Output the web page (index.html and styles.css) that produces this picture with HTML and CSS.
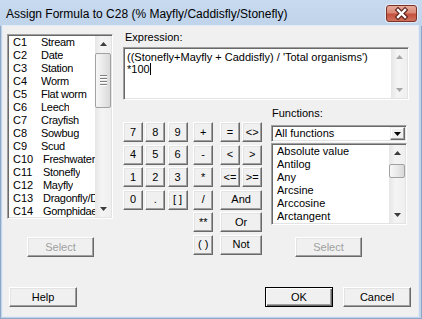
FILE: index.html
```html
<!DOCTYPE html>
<html lang="en">
<head>
    <meta charset="UTF-8">
    <title>Assign Formula to C28</title>
    <link rel="stylesheet" href="styles.css">
</head>
<body>
<div class="window">
    <div class="titlebar">
        <span class="title">Assign Formula to C28 (% Mayfly/Caddisfly/Stonefly)</span>
        <span class="close-btn">
            <svg width="31" height="17" viewBox="0 0 31 17">
                <path d="M12 5 L19 12 M19 5 L12 12" stroke="#5b2219" stroke-width="4.6" stroke-linecap="square"/>
                <path d="M12 5 L19 12 M19 5 L12 12" stroke="#fff" stroke-width="2.4" stroke-linecap="square"/>
            </svg>
        </span>
    </div>

    <div class="client">
        <div class="main">
            <!-- columns list -->
            <div class="col-left">
                <div class="listbox columns">
                    <div class="items">
                        <div class="item"><span class="num">C1</span><span class="name">Stream</span></div>
                        <div class="item"><span class="num">C2</span><span class="name">Date</span></div>
                        <div class="item"><span class="num">C3</span><span class="name">Station</span></div>
                        <div class="item"><span class="num">C4</span><span class="name">Worm</span></div>
                        <div class="item"><span class="num">C5</span><span class="name">Flat worm</span></div>
                        <div class="item"><span class="num">C6</span><span class="name">Leech</span></div>
                        <div class="item"><span class="num">C7</span><span class="name">Crayfish</span></div>
                        <div class="item"><span class="num">C8</span><span class="name">Sowbug</span></div>
                        <div class="item"><span class="num">C9</span><span class="name">Scud</span></div>
                        <div class="item dd"><span class="num">C10</span><span class="name">Freshwater clam</span></div>
                        <div class="item dd"><span class="num">C11</span><span class="name">Stonefly</span></div>
                        <div class="item dd"><span class="num">C12</span><span class="name">Mayfly</span></div>
                        <div class="item dd"><span class="num">C13</span><span class="name">Dragonfly/Damselfly</span></div>
                        <div class="item dd"><span class="num">C14</span><span class="name">Gomphidae</span></div>
                    </div>
                    <div class="sb">
                        <div class="arrow"><svg width="7" height="4"><polygon points="0,4 3.5,0 7,4" fill="#3c3c3c"/></svg></div>
                        <div class="track">
                            <div class="thumb big">
                                <span class="grip"></span><span class="grip"></span><span class="grip"></span><span class="grip"></span>
                            </div>
                        </div>
                        <div class="arrow"><svg width="7" height="4"><polygon points="0,0 7,0 3.5,4" fill="#3c3c3c"/></svg></div>
                    </div>
                </div>
                <button class="btn select-left" disabled>Select</button>
            </div>

            <!-- expression and keypad -->
            <div class="col-right">
                <div class="label expr-label">Expression:</div>
                <div class="expr">
                    <div class="expr-text">((Stonefly+Mayfly + Caddisfly) / 'Total organisms')<br>*100<span class="caret"></span></div>
                    <div class="sb">
                        <div class="arrow"><svg width="7" height="4"><polygon points="0,4 3.5,0 7,4" fill="#a6a6a6"/></svg></div>
                        <div class="track"></div>
                        <div class="arrow"><svg width="7" height="4"><polygon points="0,0 7,0 3.5,4" fill="#a6a6a6"/></svg></div>
                    </div>
                </div>

                <div class="lower">
                    <div class="keypad">
                        <div class="digits">
                            <button class="btn key">7</button>
                            <button class="btn key">8</button>
                            <button class="btn key">9</button>
                            <button class="btn key">4</button>
                            <button class="btn key">5</button>
                            <button class="btn key">6</button>
                            <button class="btn key">1</button>
                            <button class="btn key">2</button>
                            <button class="btn key">3</button>
                            <button class="btn key">0</button>
                            <button class="btn key">.</button>
                            <button class="btn key">[ ]</button>
                        </div>
                        <div class="ops">
                            <button class="btn key">+</button>
                            <button class="btn key">-</button>
                            <button class="btn key">*</button>
                            <button class="btn key">/</button>
                            <button class="btn key">**</button>
                            <button class="btn key">( )</button>
                        </div>
                        <div class="compare">
                            <button class="btn key">=</button>
                            <button class="btn key">&lt;&gt;</button>
                            <button class="btn key">&lt;</button>
                            <button class="btn key">&gt;</button>
                            <button class="btn key">&lt;=</button>
                            <button class="btn key">&gt;=</button>
                            <button class="btn key wide">And</button>
                            <button class="btn key wide">Or</button>
                            <button class="btn key wide">Not</button>
                        </div>
                    </div>

                    <div class="functions">
                        <div class="label func-label">Functions:</div>
                        <div class="dropdown">
                            <span class="dd-text">All functions</span>
                            <span class="dd-btn"><svg width="7" height="4"><polygon points="0,0 7,0 3.5,4" fill="#000"/></svg></span>
                        </div>
                        <div class="listbox funcs">
                            <div class="items">
                                <div class="item">Absolute value</div>
                                <div class="item">Antilog</div>
                                <div class="item">Any</div>
                                <div class="item">Arcsine</div>
                                <div class="item">Arccosine</div>
                                <div class="item">Arctangent</div>
                            </div>
                            <div class="sb">
                                <div class="arrow"><svg width="7" height="4"><polygon points="0,4 3.5,0 7,4" fill="#3c3c3c"/></svg></div>
                                <div class="track">
                                    <div class="thumb small"></div>
                                </div>
                                <div class="arrow"><svg width="7" height="4"><polygon points="0,0 7,0 3.5,4" fill="#3c3c3c"/></svg></div>
                            </div>
                        </div>
                        <button class="btn select-right" disabled>Select</button>
                    </div>
                </div>
            </div>
        </div>

        <div class="footer">
            <button class="btn action">Help</button>
            <button class="btn action default ok">OK</button>
            <button class="btn action">Cancel</button>
        </div>
    </div>
</div>
</body>
</html>
```

FILE: styles.css
```css
* {
    box-sizing: border-box;
}
body {
    margin: 0;
    font-family: "Liberation Sans", Arial, sans-serif;
    font-size: 11px;
    color: #000;
}
.window {
    width: 422px;
    height: 319px;
    display: flex;
    flex-direction: column;
    background: #c0d4eb;
    box-shadow: inset 0 0 0 1px #8ea7c4;
}
/* Title bar */
.titlebar {
    height: 26px;
    display: flex;
    align-items: center;
    justify-content: space-between;
    padding: 1px 5px 0 6px;
    background: linear-gradient(#c8daef, #bfd3ea);
}
.title {
    font-size: 12px;
    color: #000;
}
.close-btn {
    width: 31px;
    height: 17px;
    display: block;
    border: 1px solid #7c3227;
    border-radius: 3px;
    background: linear-gradient(#e7aa9c 0%, #d98874 45%, #c4503d 55%, #d0735c 100%);
    box-shadow: 0 0 0 1px rgba(255, 255, 255, 0.5);
}
.close-btn svg {
    display: block;
    margin: -1px 0 0 -1px;
}
/* Client area */
.client {
    flex: 1;
    margin: 0 4px 3px 3px;
    background: #f0f0f0;
    display: flex;
    flex-direction: column;
    box-shadow: 0 0 0 1px #e3ebf5;
}
.main {
    flex: 1;
    display: flex;
}
.col-left {
    padding: 8px 0 0 4px;
    width: 110px;
}
.col-right {
    padding-top: 5px;
    margin-left: 10px;
    width: 286px;
}
.label {
    line-height: 13px;
    height: 13px;
}
.expr-label {
    padding-left: 2px;
    margin-bottom: 3px;
}
/* Sunken controls */
.listbox,
.expr,
.dropdown {
    background: #fff;
    border: 1px solid;
    border-color: #a0a0a0 #fff #fff #a0a0a0;
    box-shadow: inset 1px 1px #696969, inset -1px -1px #e3e3e3;
    padding: 1px;
    display: flex;
}
.listbox .items {
    flex: 1;
    overflow: hidden;
    padding-left: 4px;
}
.item {
    height: 13px;
    line-height: 13px;
    white-space: nowrap;
    display: flex;
}
.item .num {
    width: 28px;
    flex: none;
}
.item.dd .num {
    width: 30px;
}
.item .name {
    overflow: hidden;
    letter-spacing: -0.3px;
}
.columns {
    width: 106px;
    height: 185px;
}
.expr {
    height: 53px;
}
.expr-text {
    flex: 1;
    padding: 2px 0 0 2px;
    line-height: 12px;
    white-space: nowrap;
}
.caret {
    display: inline-block;
    width: 1px;
    height: 12px;
    background: #000;
    vertical-align: top;
}
/* Scrollbars */
.sb {
    width: 16px;
    flex: none;
    display: flex;
    flex-direction: column;
    background: linear-gradient(to right, #e6e6e6, #f4f4f4 40%, #efefef);
}
.sb .arrow {
    height: 16px;
    display: flex;
    align-items: center;
    justify-content: center;
}
.sb .arrow svg {
    display: block;
}
.sb .track {
    flex: 1;
    display: flex;
    flex-direction: column;
}
.thumb {
    margin: 1px 0 0 0;
    border: 1px solid #a2a2a2;
    border-radius: 2px;
    background: linear-gradient(to right, #f7f7f7, #e9e9e9 50%, #d9d9d9);
    display: flex;
    flex-direction: column;
    align-items: center;
    justify-content: center;
    gap: 1px;
}
.thumb.big {
    height: 55px;
}
.thumb.small {
    height: 14px;
    margin-top: 3px;
}
.grip {
    width: 7px;
    height: 1px;
    background: #808080;
    box-shadow: 0 1px #fff;
    margin-bottom: 1px;
}
/* Buttons */
.btn {
    font: inherit;
    font-size: 11px;
    color: #000;
    padding: 0;
    height: 20px;
    background: #f0f0f0;
    border: 1px solid;
    border-color: #fff #696969 #696969 #fff;
    box-shadow: inset -1px -1px #a0a0a0, inset 1px 1px #e3e3e3;
    text-align: center;
    line-height: 17px;
    white-space: nowrap;
    overflow: hidden;
}
.btn:disabled {
    color: #a0a0a0;
}
.select-left {
    width: 67px;
    margin: 18px 0 0 20px;
    display: block;
}
/* Keypad */
.lower {
    display: flex;
    align-items: flex-start;
}
.keypad {
    width: 139px;
    margin-top: 22px;
    display: flex;
    align-items: flex-start;
}
.digits {
    display: grid;
    grid-template-columns: repeat(3, 20px);
    grid-auto-rows: 20px;
    gap: 2.6px 2.3px;
}
.ops {
    display: grid;
    grid-template-columns: 20px;
    grid-auto-rows: 20px;
    row-gap: 2.6px;
    margin-left: 5.6px;
}
.compare {
    display: grid;
    grid-template-columns: repeat(2, 20px);
    grid-auto-rows: 20px;
    gap: 2.6px 2.3px;
    margin-left: 6.8px;
}
.key {
    width: 100%;
}
.key.wide {
    grid-column: span 2;
}
/* Functions */
.functions {
    width: 136px;
    margin: 7px 0 0 9px;
}
.func-label {
    padding-left: 1px;
    margin-bottom: 5px;
}
.dropdown {
    height: 17px;
    align-items: stretch;
}
.dd-text {
    flex: 1;
    padding-left: 2px;
    line-height: 13px;
}
.dd-btn {
    width: 15px;
    display: flex;
    align-items: center;
    justify-content: center;
    background: #f0f0f0;
    border: 1px solid;
    border-color: #f0f0f0 #696969 #696969 #f0f0f0;
    box-shadow: inset -1px -1px #a0a0a0, inset 1px 1px #fff;
}
.funcs {
    margin-top: 1px;
    height: 82px;
}
.select-right {
    width: 67px;
    margin: 12px 0 0 24px;
    display: block;
}
/* Footer buttons */
.footer {
    display: flex;
    align-items: flex-start;
    padding: 0 7px 9px 6px;
    height: 29px;
}
.action {
    width: 68px;
}
.ok {
    margin-left: auto;
    margin-right: 10px;
}
.default {
    border: 1px solid #000;
    box-shadow: inset 1px 1px #fff, inset -1px -1px #696969, inset -2px -2px #a0a0a0;
}
```
